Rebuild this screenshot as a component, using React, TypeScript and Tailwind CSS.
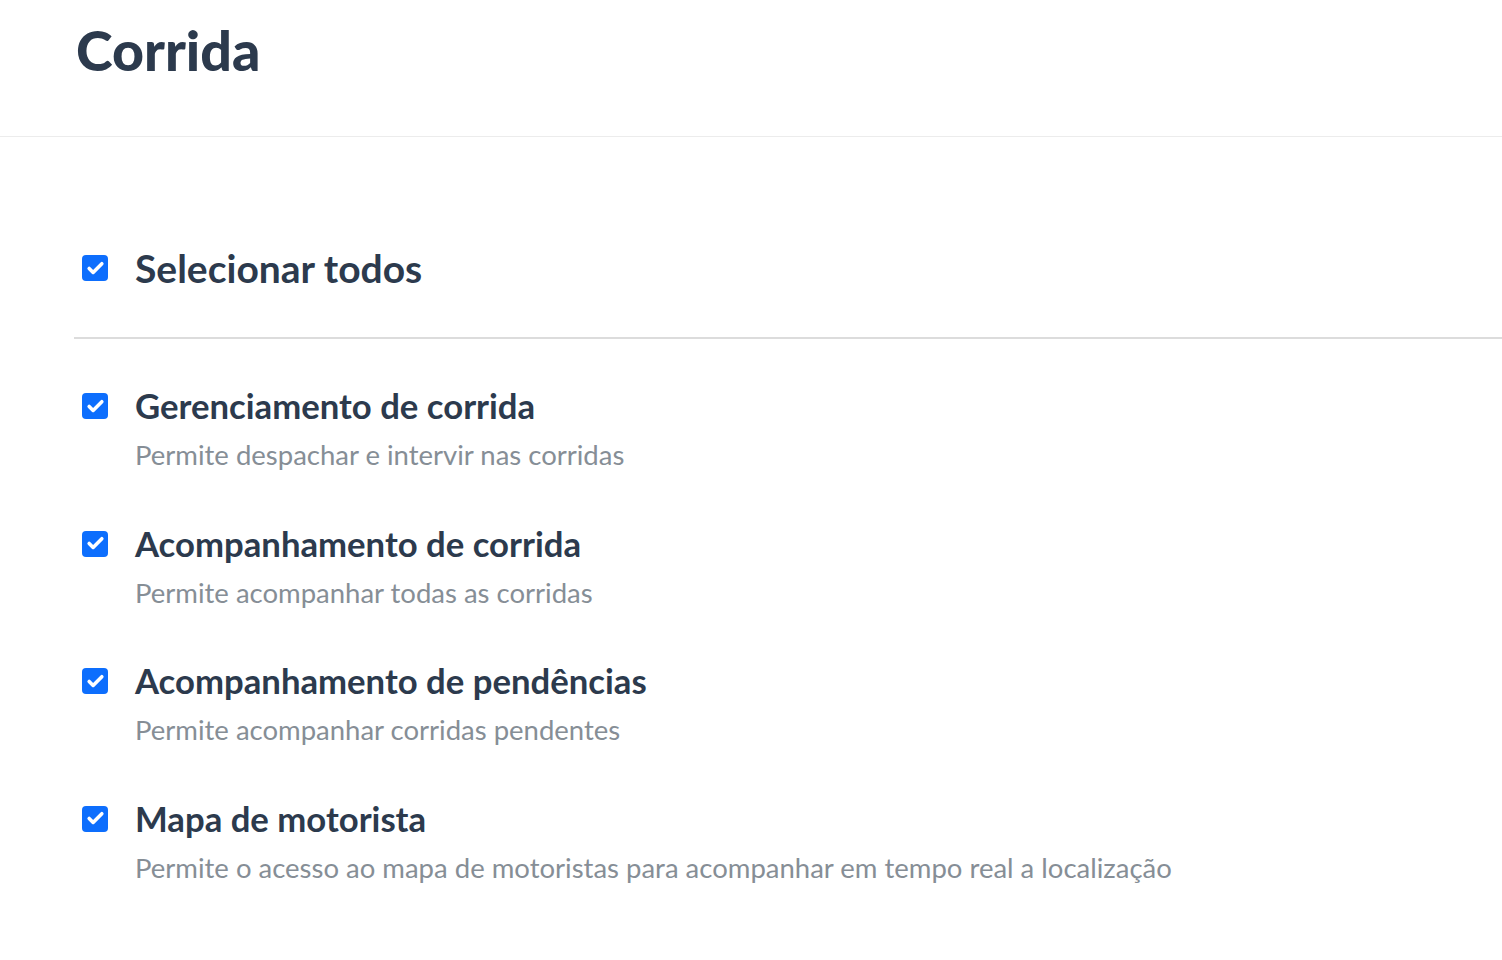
import { Check } from "lucide-react";

const items = [
  { title: "Gerenciamento de corrida", desc: "Permite despachar e intervir nas corridas" },
  { title: "Acompanhamento de corrida", desc: "Permite acompanhar todas as corridas" },
  { title: "Acompanhamento de pendências", desc: "Permite acompanhar corridas pendentes" },
  {
    title: "Mapa de motorista",
    desc: "Permite o acesso ao mapa de motoristas para acompanhar em tempo real a localização",
  },
];

const Box = () => (
  <span className="flex h-[26px] w-[26px] shrink-0 items-center justify-center rounded-[4px] bg-[#0d6efd]">
    <Check className="h-[19px] w-[19px] text-white" strokeWidth={4.5} />
  </span>
);

const App = () => {
  return (
    <div className="min-h-[960px] bg-white font-['Lato',sans-serif] text-[#2c3a4d]">
      <header className="h-[137px] border-b border-[#ececec] pl-[76px] pt-[18px]">
        <h1 className="text-[55.5px] font-black leading-[64px]">Corrida</h1>
      </header>

      <section className="ml-[74px] pt-[111px]">
        <div className="flex items-center gap-[27px] pb-[49px] pl-[8px]">
          <Box />
          <span className="text-[39px] font-bold leading-[40px]">Selecionar todos</span>
        </div>
        <div className="border-t-2 border-[#dcdcdc]" />

        <ul className="flex flex-col gap-[44.5px] pt-[47px] pl-[8px]">
          {items.map((it) => (
            <li key={it.title} className="flex flex-col">
              <div className="flex items-center gap-[27px]">
                <Box />
                <span className="text-[34.7px] font-bold leading-[40px]">{it.title}</span>
              </div>
              <p className="pl-[53px] pt-[5px] text-[27.5px] leading-[48px] text-[#868e96]">{it.desc}</p>
            </li>
          ))}
        </ul>
      </section>
    </div>
  );
};

export default App;
